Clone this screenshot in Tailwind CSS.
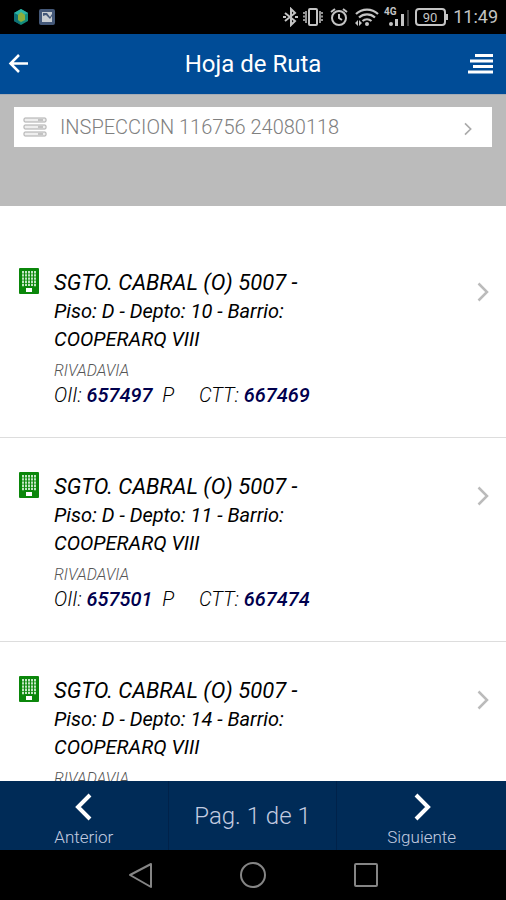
<!DOCTYPE html>
<html lang="es">
    <head>
        <meta charset="UTF-8">
        <meta name="viewport" content="width=device-width, initial-scale=1.0">
        <title>Hoja de Ruta</title>
        <script src="https://cdn.jsdelivr.net/npm/@tailwindcss/browser@4"></script>
    </head>
    <body class="h-screen flex flex-col overflow-hidden bg-white font-[Roboto,sans-serif]">

        <!-- Shared icons -->
        <svg class="hidden">
            <symbol id="building" viewBox="0 0 20 26">
                <rect width="20" height="26" rx="1" fill="#0b870b"/>
                <path d="M4 3v16M7 3v16M10 3v16M13 3v16M16 3v16" stroke="#c4e6c4" stroke-width="2" stroke-dasharray="2.4 0.8"/>
                <rect x="6" y="18" width="8" height="6" fill="#0b870b"/>
                <rect x="7" y="20" width="6" height="4" fill="#fff"/>
            </symbol>
            <symbol id="chevron" viewBox="0 0 12 20">
                <path d="M1.500 1.500 10 10l-8.500 8.500" fill="none" stroke="currentColor" stroke-width="2.500"/>
            </symbol>
        </svg>

        <!-- Status bar -->
        <div class="h-[34px] shrink-0 bg-black text-[#c4c4c4] flex items-center justify-between pl-3 pr-2">
            <div class="flex items-center gap-2">
                <svg class="w-[18px] h-[18px]" viewBox="0 0 18 18">
                    <path d="M9 1l7 4v8l-7 4-7-4V5z" fill="#128c7c"/>
                    <path d="M9 1l7 4-4 2-3-2-3 2-4-2z" fill="#2cb5a5"/>
                    <path d="M2 5l4 2v5l3 5-7-4z" fill="#0d6f75"/>
                    <path d="M9 4l4 3v5l-4 2-3-2V7z" fill="#8cae3c"/>
                </svg>
                <svg class="w-[18px] h-[18px]" viewBox="0 0 18 18">
                    <rect x="1" y="1" width="16" height="16" rx="2" fill="#445878"/>
                    <rect x="4" y="4" width="10" height="10" fill="#c9ced2"/>
                    <path d="M5 5h4l3 4 2-3v2l-2 3-4-4-3 1z" fill="#445878"/>
                </svg>
            </div>
            <div class="flex items-center gap-1">
                <svg class="w-4 h-5" viewBox="0 0 16 20" fill="none" stroke="currentColor" stroke-width="2">
                    <path d="M2 6l10 8-4 4V2l4 4-10 8"/>
                    <path d="M0 10h3M12 10h3"/>
                </svg>
                <svg class="w-5 h-5" viewBox="0 0 20 20" fill="none" stroke="currentColor" stroke-width="2">
                    <rect x="6" y="2" width="8" height="16" rx="1"/>
                    <path d="M3 4v12M17 4v12" stroke-width="1.500"/>
                    <path d="M1 5v10M19 5v10" stroke-width="1.500" stroke-dasharray="2 1.500"/>
                </svg>
                <svg class="w-6 h-5" viewBox="0 0 24 20" fill="none" stroke="currentColor" stroke-width="2">
                    <circle cx="12" cy="11" r="7"/>
                    <path d="M12 7v4l3 2M4 5l4-3M20 5l-4-3"/>
                </svg>
                <svg class="w-6 h-5" viewBox="0 0 24 20" fill="none" stroke="currentColor" stroke-width="2.200">
                    <path d="M1 7a16 16 0 0 1 22 0M4 10.500a12 12 0 0 1 16 0M7.500 14a7 7 0 0 1 9 0"/>
                    <circle cx="12" cy="17" r="2" fill="currentColor" stroke="none"/>
                    <path d="M0 16l3-3v6zM7 16l-3-3v6z" fill="currentColor" stroke="none"/>
                </svg>
                <svg class="w-7 h-6" viewBox="0 0 28 24" fill="currentColor">
                    <text x="1" y="10" font-size="10" font-weight="700">4G</text>
                    <circle cx="8" cy="19" r="2"/>
                    <path d="M12 14h3v7h-3zM18 9h3v12h-3z"/>
                    <path d="M24 5h2v16h-2z" fill="#3f3f3f"/>
                </svg>
                <svg class="w-[34px] h-5" viewBox="0 0 34 20" fill="none" stroke="currentColor" stroke-width="2">
                    <rect x="1" y="2" width="29" height="16" rx="3"/>
                    <path d="M32 7v6"/>
                    <text x="15" y="15" font-size="13" text-anchor="middle" fill="currentColor" stroke="none">90</text>
                </svg>
                <span class="text-lg">11:49</span>
            </div>
        </div>

        <!-- Header -->
        <header class="h-[60px] shrink-0 bg-[#004c97] text-white grid grid-cols-[1fr_auto_1fr] items-center px-2">
            <button aria-label="Volver" class="justify-self-start">
                <svg class="w-[22px] h-5" viewBox="0 0 22 20" fill="none" stroke="currentColor" stroke-width="2.500">
                    <path d="M11 1L2.500 9.500 11 18M2.500 9.500H20"/>
                </svg>
            </button>
            <h1 class="text-2xl">Hoja de Ruta</h1>
            <button aria-label="Menú" class="justify-self-end pr-1">
                <svg class="w-[27px] h-5" viewBox="0 0 27 20" fill="none" stroke="currentColor" stroke-width="3">
                    <path d="M8 1.500h18M3 7h23M6 12.500h20M1 18h25"/>
                </svg>
            </button>
        </header>

        <!-- Selected inspection -->
        <section class="h-28 shrink-0 bg-[#bbb] border-t border-[#a5abb5] px-[14px] pt-3">
            <button class="w-full h-10 bg-white text-[#999] flex items-center px-2">
                <svg class="w-6 h-5 mx-px" viewBox="0 0 24 20" fill="#eee" stroke="#aaa">
                    <rect x="1" y="1" width="22" height="4" rx="1"/>
                    <rect x="1" y="8" width="22" height="4" rx="1"/>
                    <rect x="1" y="15" width="22" height="4" rx="1"/>
                    <path d="M15 3h5M15 10h5M15 17h5" stroke="#999"/>
                </svg>
                <span class="ml-3 text-xl font-light text-[#808080]">INSPECCION 116756 24080118</span>
                <svg class="w-2 h-[14px] ml-auto mr-3 mt-1 text-[#aaa]"><use href="#chevron"/></svg>
            </button>
        </section>

        <!-- Route list -->
        <ul class="flex-1 min-h-0 overflow-hidden pt-7 italic">
            <li class="h-51 border-b border-[#ddd] flex items-start pt-[34px] pl-[19px] pr-[17px]">
                <svg class="w-5 h-[26px] shrink-0"><use href="#building"/></svg>
                <div class="ml-[15px] mt-px">
                    <h2 class="text-[20px] leading-7 text-black"><span class="text-[22px]">SGTO. CABRAL (O) 5007 -</span><br>Piso: D - Depto: 10 - Barrio:<br>COOPERARQ VIII</h2>
                    <p class="mt-1.5 text-base leading-6 font-light text-[#555]">RIVADAVIA</p>
                    <p class="text-xl leading-6 font-light text-black">OII: <b class="font-medium text-[#00004d]">657497</b>&nbsp; P <span class="ml-5">CTT: <b class="font-medium text-[#00004d]">667469</b></span></p>
                </div>
                <svg class="w-3 h-5 ml-auto mt-[14px] shrink-0 text-[#bbb]"><use href="#chevron"/></svg>
            </li>
            <li class="h-51 border-b border-[#ddd] flex items-start pt-[34px] pl-[19px] pr-[17px]">
                <svg class="w-5 h-[26px] shrink-0"><use href="#building"/></svg>
                <div class="ml-[15px] mt-px">
                    <h2 class="text-[20px] leading-7 text-black"><span class="text-[22px]">SGTO. CABRAL (O) 5007 -</span><br>Piso: D - Depto: 11 - Barrio:<br>COOPERARQ VIII</h2>
                    <p class="mt-1.5 text-base leading-6 font-light text-[#555]">RIVADAVIA</p>
                    <p class="text-xl leading-6 font-light text-black">OII: <b class="font-medium text-[#00004d]">657501</b>&nbsp; P <span class="ml-5">CTT: <b class="font-medium text-[#00004d]">667474</b></span></p>
                </div>
                <svg class="w-3 h-5 ml-auto mt-[14px] shrink-0 text-[#bbb]"><use href="#chevron"/></svg>
            </li>
            <li class="h-51 border-b border-[#ddd] flex items-start pt-[34px] pl-[19px] pr-[17px]">
                <svg class="w-5 h-[26px] shrink-0"><use href="#building"/></svg>
                <div class="ml-[15px] mt-px">
                    <h2 class="text-[20px] leading-7 text-black"><span class="text-[22px]">SGTO. CABRAL (O) 5007 -</span><br>Piso: D - Depto: 14 - Barrio:<br>COOPERARQ VIII</h2>
                    <p class="mt-1.5 text-base leading-6 font-light text-[#555]">RIVADAVIA</p>
                </div>
                <svg class="w-3 h-5 ml-auto mt-[14px] shrink-0 text-[#bbb]"><use href="#chevron"/></svg>
            </li>
        </ul>

        <!-- Pagination -->
        <footer class="h-[69px] shrink-0 bg-[#002b57] text-[#c3cbe0] font-light grid grid-cols-3 divide-x divide-[#00224a]">
            <button class="flex flex-col items-center justify-end pb-px">
                <svg class="w-5 h-8 text-white" viewBox="0 0 20 32" fill="none" stroke="currentColor" stroke-width="4">
                    <path d="M16 2L4 14l12 12"/>
                </svg>
                <span class="text-[17px] leading-6">Anterior</span>
            </button>
            <p class="flex items-center justify-center text-2xl">Pag. 1 de 1</p>
            <button class="flex flex-col items-center justify-end pb-px">
                <svg class="w-5 h-8 text-white" viewBox="0 0 20 32" fill="none" stroke="currentColor" stroke-width="4">
                    <path d="M4 2l12 12L4 26"/>
                </svg>
                <span class="text-[17px] leading-6">Siguiente</span>
            </button>
        </footer>

        <!-- System navigation -->
        <nav class="h-[50px] shrink-0 bg-black text-[#858585] flex items-center justify-center gap-[84px]">
            <button aria-label="Atrás">
                <svg class="w-7 h-7" viewBox="0 0 28 28" fill="none" stroke="currentColor" stroke-width="2" stroke-linejoin="round">
                    <path d="M24 3v23L3 14z"/>
                </svg>
            </button>
            <button aria-label="Inicio">
                <svg class="w-7 h-7" viewBox="0 0 28 28" fill="none" stroke="currentColor" stroke-width="2">
                    <circle cx="14" cy="14" r="12"/>
                </svg>
            </button>
            <button aria-label="Recientes">
                <svg class="w-7 h-7" viewBox="0 0 28 28" fill="none" stroke="currentColor" stroke-width="2">
                    <rect x="4" y="3" width="22" height="22" rx="1"/>
                </svg>
            </button>
        </nav>
    </body>
</html>
